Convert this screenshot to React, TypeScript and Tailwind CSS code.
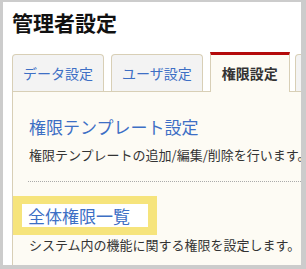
import { FC } from 'react';

const tabs = ['データ設定', 'ユーザ設定'];

const App: FC = () => {
  return (
    <div
      className="box-border h-[269px] w-[306px] overflow-hidden border-b-[4px] border-l-[3px] border-r-[5px] border-t-2 border-[#cccccc] bg-white"
      style={{ fontFamily: '"Noto Sans CJK JP", "Noto Sans", sans-serif' }}>
      <div className="flex h-full flex-col pl-[9px]">
        <h1 className="pt-[5px] text-[21px] font-bold leading-[30px] text-[#111111]">管理者設定</h1>

        {/* tabs */}
        <div className="mt-[15px] flex shrink-0 items-end gap-[7px] border-b border-[#d8cfb6]">
          {tabs.map(label => (
            <div
              className="flex h-[37px] shrink-0 items-center rounded-t-[4px] border border-b-0 border-[#d8cfb6] bg-[#f3f3f3] px-[10px] pt-px text-[14px] text-[#3d6fc5]"
              key={label}>
              {label}
            </div>
          ))}
          <div className="-mb-px flex h-[40px] w-[80px] shrink-0 items-center justify-center border-x border-t-[3px] border-x-[#d8cfb6] border-t-[#b40a0a] bg-[#fdfbf4] text-[14px] font-bold text-[#333333]">
            権限設定
          </div>
          <div className="ml-[-2px] flex h-[37px] shrink-0 items-center rounded-t-[4px] border border-b-0 border-[#d8cfb6] bg-[#f3f3f3] px-[10px] text-[14px] text-[#3d6fc5]">
            ログ設定
          </div>
        </div>

        {/* panel */}
        <div className="flex-1 overflow-hidden border-l border-[#d8cfb6] bg-[#fdfbf4] pt-[23px]">
          <a className="block pl-4 text-[17px] leading-[24px] text-[#3d6fc5]">権限テンプレート設定</a>
          <p className="mt-[6px] whitespace-nowrap pl-4 text-[13px] leading-[20px] text-[#333333]">
            権限テンプレートの追加/編集/削除を行います。
          </p>
          <div className="ml-[15px] mt-[16px] border-t border-dotted border-[#aaaaaa]" />

          <div className="mt-[14px] w-[144px] bg-[#f6e47c] p-[8px] pl-[9px]">
            <a className="block h-[23px] w-[126px] bg-white pl-[6px] text-[17px] leading-[23px] text-[#3d6fc5]">
              全体権限一覧
            </a>
          </div>
          <p className="whitespace-nowrap pl-4 text-[13px] leading-[20px] text-[#333333]">
            システム内の機能に関する権限を設定します。
          </p>
        </div>
      </div>
    </div>
  );
};

export default App;
